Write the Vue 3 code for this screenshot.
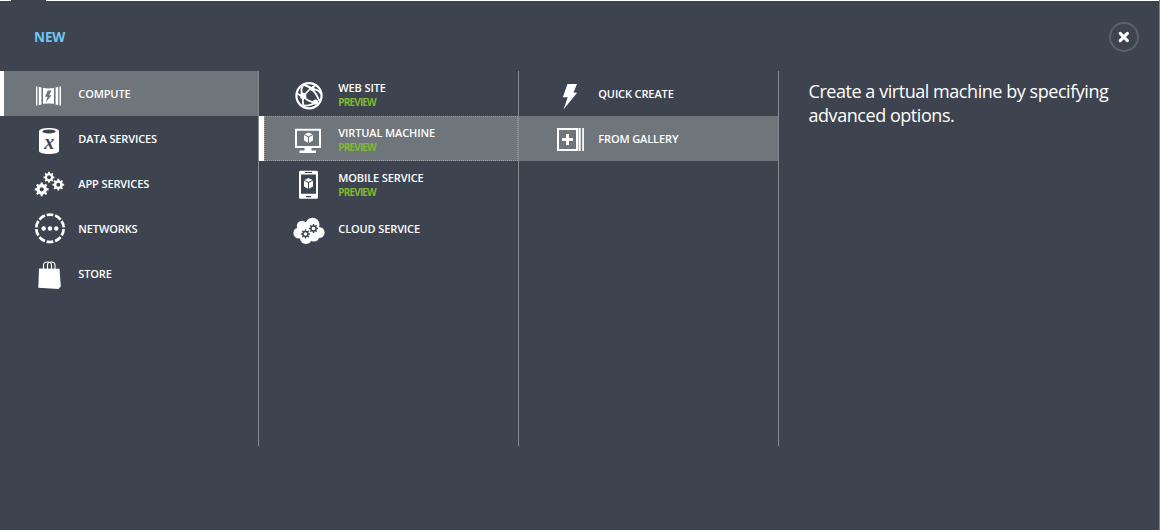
<script setup>
const gear = (cx, cy, outer, inner, hole, teeth = 8, rot = 0) => {
  const step = (Math.PI * 2) / teeth
  const pt = (r, a) => `${(cx + r * Math.cos(a)).toFixed(2)} ${(cy + r * Math.sin(a)).toFixed(2)}`
  let d = ''
  for (let i = 0; i < teeth; i++) {
    const a = i * step + rot
    d += `${i ? 'L' : 'M'}${pt(inner, a - step * 0.27)}L${pt(outer, a - step * 0.2)}L${pt(outer, a + step * 0.2)}L${pt(inner, a + step * 0.27)}`
  }
  return `${d}ZM${cx - hole} ${cy}a${hole} ${hole} 0 1 0 ${hole * 2} 0a${hole} ${hole} 0 1 0 ${-hole * 2} 0Z`
}

const columns = [
  [
    { icon: 'compute', label: 'COMPUTE', active: true, marked: true },
    { icon: 'data', label: 'DATA SERVICES' },
    { icon: 'app', label: 'APP SERVICES' },
    { icon: 'network', label: 'NETWORKS' },
    { icon: 'store', label: 'STORE' },
  ],
  [
    { icon: 'web', label: 'WEB SITE', preview: true },
    { icon: 'vm', label: 'VIRTUAL MACHINE', preview: true, active: true, marked: true, focused: true },
    { icon: 'mobile', label: 'MOBILE SERVICE', preview: true },
    { icon: 'cloud', label: 'CLOUD SERVICE' },
  ],
  [
    { icon: 'quick', label: 'QUICK CREATE' },
    { icon: 'gallery', label: 'FROM GALLERY', active: true },
  ],
]
</script>

<template>
  <div class="panel">
    <div class="topline"><i></i><i></i></div>
    <header class="head">
      <h1>NEW</h1>
      <button class="close" aria-label="Close">
        <svg width="32" height="32" viewBox="0 0 32 32">
          <circle cx="16" cy="16" r="14" fill="none" stroke="#5b626d" stroke-width="2" />
          <path d="M12.2 12.4L19.4 19.6M19.4 12.4L12.2 19.6" stroke="#fff" stroke-width="3.100" stroke-linecap="round" />
        </svg>
      </button>
    </header>
    <div class="body">
      <ul v-for="(items, c) in columns" :key="c" class="column" :class="{ first: c === 0 }">
        <li v-for="item in items" :key="item.label" class="row"
            :class="{ active: item.active, marked: item.marked, focused: item.focused }">
          <svg class="icon" width="36" height="45" viewBox="0 0 36 45" fill="#fff">
            <template v-if="item.icon === 'compute'">
              <path d="M4 15.5h1.4v19H4zM6.8 15.8l2.6.7v17l-2.6.7zM27.5 15.5H29v19h-1.5zM26.2 15.8l-2.6.7v17l2.6.7z" />
              <path fill-rule="evenodd" d="M11 17q5.500.800 11 0v15.800q-5.500-.800-11 0zM15.800 19.500l-2.800 6.200h2.600l-2 5.800 6-7.300h-2.400l2.400-4.700z" />
            </template>
            <template v-else-if="item.icon === 'data'">
              <path d="M7 15.2C7 10.900 27 10.900 27 15.200V35c0 4-20 4-20 0z" />
              <ellipse cx="17" cy="15.400" rx="6.700" ry="2" fill="#3e444f" />
              <text x="17.200" y="32.500" class="xglyph" text-anchor="middle">x</text>
            </template>
            <g v-else-if="item.icon === 'app'" fill-rule="evenodd">
              <path :d="gear(17, 16.3, 5.5, 4.200, 2)" />
              <path :d="gear(9.7, 28.3, 7, 5.300, 2.100)" />
              <path :d="gear(26.3, 23.700, 5.900, 4.500, 2)" />
            </g>
            <template v-else-if="item.icon === 'network'">
              <circle cx="18" cy="22.300" r="13.700" pathLength="100" fill="none" stroke="#fff" stroke-width="2.700"
                      stroke-dasharray="7.900 2.100" stroke-dashoffset="-1.050" />
              <circle cx="11.700" cy="22.500" r="2.200" /><circle cx="18" cy="22.500" r="2.200" /><circle cx="24.300" cy="22.500" r="2.200" />
            </template>
            <template v-else-if="item.icon === 'store'">
              <path d="M7 17.500l20.500.3 1.300 17.500-2.300 2.700L6.300 36.700z" />
              <path d="M11.500 18v-4c0-4 8-4 8 0v4M15.500 18v-4c0-4 7.500-4 7.500 0v4" fill="none" stroke="#fff" stroke-width="1.100" />
            </template>
            <template v-else-if="item.icon === 'web'">
              <g fill="none" stroke="#fff">
                <circle cx="17" cy="24.700" r="12.600" stroke-width="2.200" />
                <path stroke-width="1.800" d="M11 13.500Q22 16 27.500 30M23.500 14.500Q19 16 11.500 25M4.500 22Q8 25 11.500 25Q15 31 24 31.500M11.500 25Q10 31 12 36M20.500 18.500Q26 18 29 23M11 14.500Q8 19 10.500 25M24 31Q19 35 12 34.500" />
              </g>
              <circle cx="11.200" cy="25" r="3.200" /><circle cx="20.500" cy="18" r="2.300" /><circle cx="23.500" cy="31" r="2.600" />
            </template>
            <template v-else-if="item.icon === 'vm'">
              <path fill-rule="evenodd" d="M3 12.700h26v19.300H3zM5 14.700v15.300h22V14.700zM12.500 32h7v2.500h4.500V37H7.500v-2.500h5z" />
              <path d="M16.500 16.500l4 1.700-4 2-4-2zM12 19.100l4 2.100v5.600l-4-2.300zM21 19.100l-4 2.100v5.600l4-2.300z" />
            </template>
            <template v-else-if="item.icon === 'mobile'">
              <path fill-rule="evenodd" d="M8.500 9.700h16q1.500 0 1.500 1.500v25q0 1.500-1.500 1.500h-16Q7 37.700 7 36.200v-25q0-1.500 1.500-1.500zM9 13.500v19.300h15V13.500zM13 11h7v1h-7zM14 35h5v1.200h-5z" />
              <path d="M16.500 17l4 1.900-4 2-4-2zM12 19.700l4 2.100v6l-4-2.300zM21 19.700l-4 2.100v6l4-2.300z" />
            </template>
            <template v-else-if="item.icon === 'cloud'">
              <circle cx="7" cy="27" r="5.600" /><circle cx="10" cy="20" r="5.200" /><circle cx="20.500" cy="18.800" r="7" />
              <circle cx="27" cy="26.500" r="5.600" /><circle cx="14" cy="32" r="6" /><circle cx="22" cy="30" r="5.500" /><circle cx="15" cy="24" r="8" />
              <g fill="#3e444f" fill-rule="evenodd">
                <path :d="gear(13.500, 28, 4.600, 3.300, 1.800)" />
                <path :d="gear(21.500, 22.500, 4.600, 3.300, 1.800)" />
              </g>
            </template>
            <path v-else-if="item.icon === 'quick'" d="M15.500 13H25l-3.500 8.500 3.600.2L11.500 38.500l4.200-12.300h-4.900z" />
            <template v-else>
              <path fill-rule="evenodd" d="M5 12h21.500v23H5zM7 14v19h17V14zM14 18h3v4h4v3h-4v4h-3v-4h-4v-3h4zM27 12h1.700v23H27zM30.200 12h1.700v23h-1.700z" />
            </template>
          </svg>
          <div class="words" :class="{ double: item.preview }">
            <span class="label">{{ item.label }}</span>
            <span v-if="item.preview" class="preview">PREVIEW</span>
          </div>
        </li>
      </ul>
      <p class="description">Create a virtual machine by specifying advanced options.</p>
    </div>
  </div>
</template>

<style>
body { background: #3e444f; }
</style>

<style scoped>
.panel {
  box-sizing: border-box;
  width: 1160px;
  height: 530px;
  overflow: hidden;
  background: #3e444f;
  border-right: 1px solid #7b8088;
  color: #fff;
  font-family: "Open Sans", "Noto Sans", sans-serif;
}
.topline { display: flex; gap: 35px; height: 1px; }
.topline i { width: 11px; background: #fff; }
.topline i:last-child { flex: 1; }
.head {
  display: flex;
  justify-content: space-between;
  height: 70px;
  padding: 0 19px 0 34px;
}
h1 {
  margin: 27px 0 0;
  font-size: 13.500px;
  line-height: 18px;
  font-weight: 700;
  letter-spacing: -0.100px;
  color: #70c5f2;
}
.close {
  width: 32px;
  height: 32px;
  margin: 20px 0 0;
  padding: 0;
  border: 0;
  background: none;
}
.body { display: flex; height: 375px; }
.column {
  box-sizing: border-box;
  flex: none;
  width: 260px;
  margin: 0;
  padding: 0;
  list-style: none;
  border-right: 1px solid #858990;
}
.column.first { width: 259px; }
.row {
  box-sizing: border-box;
  position: relative;
  display: flex;
  height: 45px;
  padding-left: 33px;
}
.first .row { padding-left: 32px; }
.row.active { background: #6e757b; }
.row.marked::before {
  content: "";
  position: absolute;
  left: 0;
  top: 0;
  width: 5px;
  height: 45px;
  background: #fff;
}
.first .row.marked::before { width: 4px; }
.row.focused::after {
  content: "";
  position: absolute;
  inset: 0 0 0 5px;
  border: 1px dotted #a39a92;
}
.icon { flex: none; display: block; }
.words {
  display: flex;
  flex-direction: column;
  justify-content: center;
  margin-left: 10.300px;
  white-space: nowrap;
}
.words.double { padding-top: 1px; }
.label { font-size: 11px; line-height: 15px; font-weight: 600; letter-spacing: -0.120px; }
.preview { font-size: 10px; line-height: 14px; font-weight: 700; letter-spacing: -0.850px; color: #7fba2f; }
.xglyph { font: italic bold 20px "Liberation Serif", serif; fill: #3e444f; }
.description {
  width: 320px;
  margin: 8px 0 0 29.500px;
  font-family: "Open Sans", sans-serif;
  font-size: 18px;
  line-height: 24px;
  letter-spacing: -0.450px;
}
</style>
